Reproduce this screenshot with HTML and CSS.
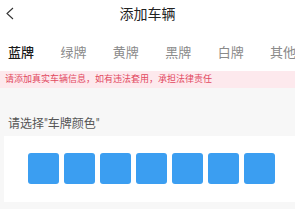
FILE: index.html
```html
<!DOCTYPE html>
<html lang="zh-CN">
<head>
    <meta charset="UTF-8">
    <meta name="viewport" content="width=device-width, initial-scale=1.0">
    <title>添加车辆</title>
    <link rel="stylesheet" href="styles.css">
</head>
<body>
    <div class="top">
        <!-- Header -->
        <div class="header">
            <svg class="back" width="10" height="13" viewBox="0 0 10 13">
                <polyline points="8,1 2,6.5 8,12" fill="none" stroke="#333" stroke-width="1.1"/>
            </svg>
            <span class="title">添加车辆</span>
        </div>

        <!-- Plate colour tabs -->
        <div class="tabs">
            <div class="tab active">蓝牌</div>
            <div class="tab">绿牌</div>
            <div class="tab">黄牌</div>
            <div class="tab">黑牌</div>
            <div class="tab">白牌</div>
            <div class="tab">其他</div>
        </div>
    </div>

    <div class="notice">请添加真实车辆信息，如有违法套用，承担法律责任</div>

    <p class="label">请选择"车牌颜色"</p>

    <div class="plate-box">
        <div class="cell"></div>
        <div class="cell"></div>
        <div class="cell"></div>
        <div class="cell"></div>
        <div class="cell"></div>
        <div class="cell"></div>
        <div class="cell"></div>
    </div>
</body>
</html>
```

FILE: styles.css
```css
body {
    margin: 0;
    background: #f7f7f7;
    font-family: "Roboto", "Noto Sans CJK SC", sans-serif;
    overflow: hidden;
}

.top {
    background: #ffffff;
}

.header {
    position: relative;
    height: 27px;
    line-height: 27px;
    text-align: center;
}

.back {
    position: absolute;
    left: 5px;
    top: 7px;
}

.title {
    font-size: 14px;
    color: #222;
}

.tabs {
    display: flex;
    gap: 26.4px;
    padding: 18px 0 10px 8px;
    white-space: nowrap;
}

.tab {
    font-size: 13px;
    line-height: 16px;
    color: #8a8a8a;
}

.tab.active {
    color: #1a1a1a;
    font-weight: 500;
}

.notice {
    height: 17px;
    line-height: 17px;
    padding-left: 5px;
    font-size: 9px;
    color: #e2485f;
    background: #fde9ed;
    white-space: nowrap;
}

.label {
    margin: 0;
    padding: 28px 0 4px 8px;
    font-size: 12px;
    line-height: 16px;
    color: #555;
}

.plate-box {
    display: flex;
    gap: 5px;
    margin-left: 4px;
    padding: 17px 0 18px 24px;
    background: #ffffff;
}

.cell {
    width: 31px;
    height: 31px;
    border-radius: 3px;
    background: #3b9ef1;
}
```
